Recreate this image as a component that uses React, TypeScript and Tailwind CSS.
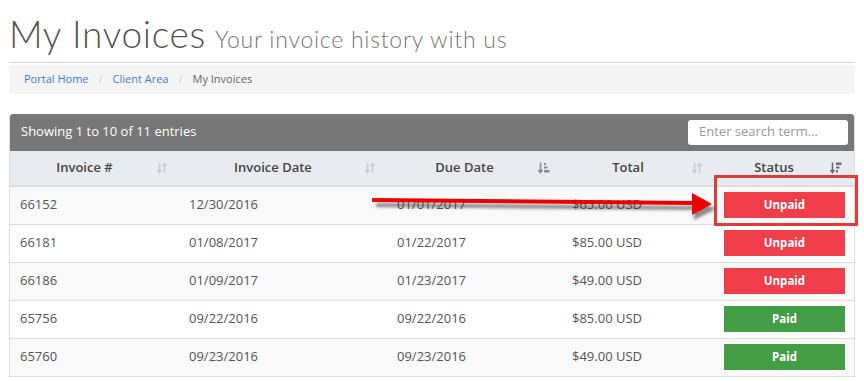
import { ReactNode } from "react";

interface Invoice {
  id: string;
  date: string;
  due: string;
  total: string;
  paid: boolean;
}

const invoices: Invoice[] = [
  { id: "66152", date: "12/30/2016", due: "01/01/2017", total: "$65.00 USD", paid: false },
  { id: "66181", date: "01/08/2017", due: "01/22/2017", total: "$85.00 USD", paid: false },
  { id: "66186", date: "01/09/2017", due: "01/23/2017", total: "$49.00 USD", paid: false },
  { id: "65756", date: "09/22/2016", due: "09/22/2016", total: "$85.00 USD", paid: true },
  { id: "65760", date: "09/23/2016", due: "09/23/2016", total: "$49.00 USD", paid: true },
];

// sort glyphs like the DataTables ones
function SortBoth() {
  return (
    <svg width="10" height="12" viewBox="0 0 10 12" className="text-[#c9ccd0]">
      <path d="M2.5 1v9M0.5 8l2 2.5 2-2.5" stroke="currentColor" strokeWidth="1.6" fill="none" />
      <path d="M7.5 11V2M5.5 4l2-2.5 2 2.5" stroke="currentColor" strokeWidth="1.6" fill="none" />
    </svg>
  );
}

function SortAsc() {
  return (
    <svg width="12" height="12" viewBox="0 0 12 12" className="text-[#888c90]">
      <path d="M2.5 0.5v10M0.5 8l2 2.5 2-2.5" stroke="currentColor" strokeWidth="1.6" fill="none" />
      <rect x="6" y="1" width="2" height="2" fill="currentColor" />
      <rect x="6" y="4.5" width="3.5" height="2" fill="currentColor" />
      <rect x="6" y="8" width="5.5" height="2.5" fill="currentColor" />
    </svg>
  );
}

function SortDesc() {
  return (
    <svg width="12" height="12" viewBox="0 0 12 12" className="text-[#6b6f73]">
      <path d="M2.5 0.5v10M0.5 8l2 2.5 2-2.5" stroke="currentColor" strokeWidth="1.6" fill="none" />
      <rect x="6" y="0.5" width="5.5" height="2.5" fill="currentColor" />
      <rect x="6" y="4.5" width="3.5" height="2" fill="currentColor" />
      <rect x="6" y="8" width="2" height="2.5" fill="currentColor" />
    </svg>
  );
}

function Th({ children, icon, w }: { children: ReactNode; icon: ReactNode; w: string }) {
  return (
    <div className={`${w} relative flex items-center justify-center pl-[10px] pr-[30px]`}>
      <span>{children}</span>
      <span className="absolute right-[12px] top-1/2 -translate-y-1/2 flex">{icon}</span>
    </div>
  );
}

export default function App() {
  const cols = ["w-[169px]", "w-[208px]", "w-[175px]", "w-[152px]", "flex-1"];

  return (
    <div className="relative min-h-[381px] bg-white px-[9px] text-[#555] font-['Open_Sans',sans-serif]">
      {/* Page title */}
      <div className="border-b border-[#d4d4d4] pt-[13px] pb-[5px] flex items-baseline gap-[9px]">
        <h1 className="text-[37px] leading-[42px] font-light text-[#555] tracking-[0.7px] font-['Lato','Open_Sans',sans-serif]">
          My Invoices
        </h1>
        <span className="text-[23px] font-light text-[#777] tracking-[0.75px] font-['Lato','Open_Sans',sans-serif]">
          Your invoice history with us
        </span>
      </div>

      {/* Breadcrumb */}
      <div className="mt-[2px] h-[29px] rounded-[3px] bg-[#f4f4f4] flex items-center px-[15px] text-[11px]">
        <a className="text-[#3b7dd8]">Portal Home</a>
        <span className="px-[10px] text-[#ccc]">/</span>
        <a className="text-[#3b7dd8]">Client Area</a>
        <span className="px-[10px] text-[#ccc]">/</span>
        <span className="text-[#666]">My Invoices</span>
      </div>

      {/* Table panel */}
      <div className="mt-[20px] rounded-t-[4px] border-x border-[#ddd] overflow-hidden">
        <div className="h-[37px] bg-[#777] flex items-center justify-between pl-[11px] pr-[6px]">
          <span className="text-white text-[13px]">Showing 1 to 10 of 11 entries</span>
          <div className="w-[160px] h-[25px] rounded-[3px] bg-white flex items-center px-[11px] text-[13px] text-[#999]">
            Enter search term...
          </div>
        </div>

        <div className="h-[36px] bg-[#e8ebef] border-b-2 border-[#dcdcdc] flex text-[13px] font-semibold text-[#444]">
          <Th w={cols[0]} icon={<SortBoth />}>Invoice #</Th>
          <Th w={cols[1]} icon={<SortBoth />}>Invoice Date</Th>
          <Th w={cols[2]} icon={<SortAsc />}>Due Date</Th>
          <Th w={cols[3]} icon={<SortBoth />}>Total</Th>
          <Th w={cols[4]} icon={<SortDesc />}>Status</Th>
        </div>

        {invoices.map((inv, i) => (
          <div
            key={inv.id}
            className={`h-[38px] flex items-center border-b border-[#ddd] text-[13px] ${i % 2 === 0 ? "bg-[#f9f9f9]" : "bg-white"}`}
          >
            <div className={`${cols[0]} pl-[10px]`}>{inv.id}</div>
            <div className={`${cols[1]} pl-[10px]`}>{inv.date}</div>
            <div className={`${cols[2]} pl-[10px]`}>{inv.due}</div>
            <div className={`${cols[3]} pl-[10px]`}>{inv.total}</div>
            <div className={`${cols[4]} pl-[10px] pr-[9px]`}>
              <div
                className={`h-[26px] flex items-center justify-center text-white text-[11.5px] font-bold ${inv.paid ? "bg-[#439d44]" : "bg-[#ef3e49]"}`}
              >
                {inv.paid ? "Paid" : "Unpaid"}
              </div>
            </div>
          </div>
        ))}
      </div>

      {/* Annotation: highlight box and arrow */}
      <div className="absolute left-[714px] top-[175px] w-[144px] h-[51px] border-[3px] border-[#e53a3a] pointer-events-none" />
      <svg className="absolute left-[368px] top-[188px] pointer-events-none" width="350" height="36" viewBox="0 0 350 36">
        <defs>
          <filter id="sh" x="-10%" y="-50%" width="120%" height="250%">
            <feGaussianBlur stdDeviation="1.5" />
          </filter>
        </defs>
        <g transform="translate(4,5)" opacity="0.55" filter="url(#sh)">
          <path d="M4 12 L324 15" stroke="#333" strokeWidth="4" />
          <path d="M322 5 L344 16 L322 27 Z" fill="#333" />
        </g>
        <path d="M4 12 L326 15" stroke="#ee0000" strokeWidth="4" />
        <path d="M324 5 L344 16 L324 27 Z" fill="#ee0000" />
      </svg>
    </div>
  );
}
